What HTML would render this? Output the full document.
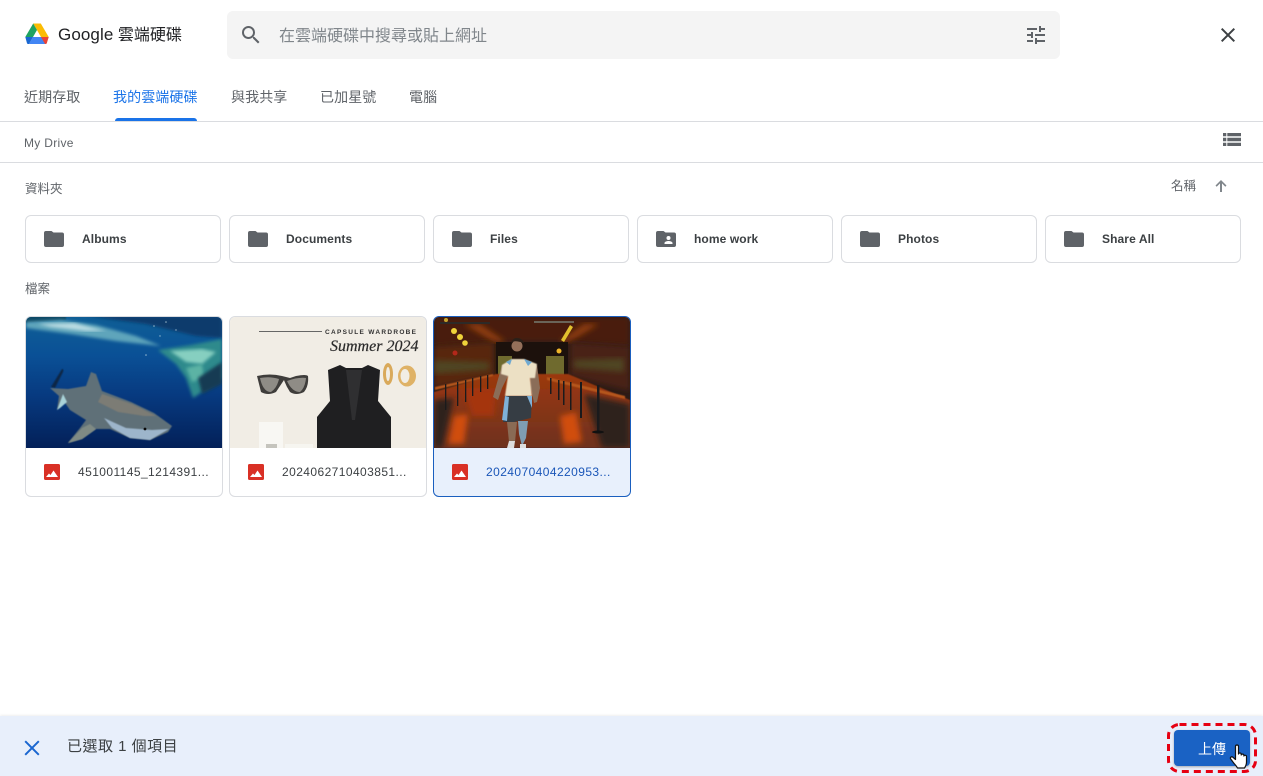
<!DOCTYPE html>
<html lang="zh-Hant"><head><meta charset="utf-8"><title>Google 雲端硬碟</title>
<style>
html,body{margin:0;padding:0;background:#fff}
body{width:1263px;height:776px;position:relative;overflow:hidden;font-family:"Liberation Sans","Noto Sans CJK TC",sans-serif;color:#5f6368}
.a{position:absolute;white-space:nowrap}
.tab{top:87px;font-size:14px;line-height:20px;color:#5f6368;letter-spacing:.1px}
.folder{position:absolute;top:215px;width:194px;height:46px;border:1px solid #dadce0;border-radius:6px;background:#fff}
.folder svg{position:absolute;left:18px;top:14px}
.folder span{position:absolute;left:56px;top:14px;font-size:12px;line-height:18px;font-weight:bold;color:#3c4043;letter-spacing:.1px}
.card{position:absolute;top:316px;width:196px;height:179px;border:1px solid #dadce0;border-radius:6px;background:#fff;overflow:hidden}
.card>svg.t{position:absolute;left:0;top:-1px}
.card svg.i{position:absolute;left:18px;top:147px}
.card span{position:absolute;left:52px;top:146px;font-size:12px;line-height:18px;color:#3c4043;letter-spacing:.42px}
</style></head><body>

<svg class="a" style="left:25px;top:23px" width="24" height="22" viewBox="0 0 24 22">
<path d="M8.2 .5H15.8L23.7 14H16Z" fill="#fbbc04"/>
<path d="M8.2 .5L12 7 8 14H.3Z" fill="#1ea362"/>
<path d="M8 14H23.7L20 21H4Z" fill="#4285f4"/>
<path d="M.3 14H8L4 21H3.2Q2.4 21 2 20.2Z" fill="#1967d2"/>
<path d="M16 14H23.7L21.8 20.2Q21.3 21 20.4 21H20Z" fill="#ea4335"/>
</svg>
<div class="a" style="left:58px;top:24px;font-size:16px;line-height:22px;color:#202124"><span style="font-size:17px;letter-spacing:.1px">Google</span> 雲端硬碟</div>

<div class="a" style="left:227px;top:11px;width:833px;height:48px;background:#f4f4f4;border-radius:6px"></div>
<svg class="a" style="left:239px;top:23px" width="24" height="24" viewBox="0 0 24 24"><path fill="#5f6368" d="M15.5 14h-.79l-.28-.27A6.471 6.471 0 0 0 16 9.5 6.5 6.5 0 1 0 9.5 16c1.61 0 3.09-.59 4.23-1.57l.27.28v.79l5 4.99L20.49 19l-4.99-5zm-6 0C7.01 14 5 11.99 5 9.5S7.01 5 9.5 5 14 7.01 14 9.5 11.99 14 9.5 14z"/></svg>
<div class="a" style="left:279px;top:26px;font-size:16px;line-height:22px;color:#80868b">在雲端硬碟中搜尋或貼上網址</div>
<svg class="a" style="left:1024px;top:23px" width="24" height="24" viewBox="0 0 24 24"><path fill="#5f6368" d="M3 17v2h6v-2H3zM3 5v2h10V5H3zm10 16v-2h8v-2h-8v-2h-2v6h2zM7 9v2H3v2h4v2h2V9H7zm14 4v-2H11v2h10zm-6-4h2V7h4V5h-4V3h-2v6z"/></svg>
<svg class="a" style="left:1216px;top:23px" width="24" height="24" viewBox="0 0 24 24"><path fill="#3c4043" d="M19 6.400 17.600 5 12 10.600 6.400 5 5 6.400 10.600 12 5 17.600 6.400 19 12 13.400 17.600 19 19 17.600 13.400 12z"/></svg>

<div class="a tab" style="left:24px">近期存取</div>
<div class="a tab" style="left:113px;color:#1a73e8">我的雲端硬碟</div>
<div class="a tab" style="left:231px">與我共享</div>
<div class="a tab" style="left:320px">已加星號</div>
<div class="a tab" style="left:409px">電腦</div>
<div class="a" style="left:115px;top:118px;width:82px;height:3px;background:#1a73e8;border-radius:3px 3px 0 0"></div>
<div class="a" style="left:0;top:121px;width:1263px;height:1px;background:#dadce0"></div>
<div class="a" style="left:24px;top:134px;font-size:12px;line-height:18px;color:#5f6368;letter-spacing:.3px">My Drive</div>
<svg class="a" style="left:1223px;top:133px" width="18" height="13" viewBox="0 0 18 13"><path fill="#5f6368" d="M0 0h3.300v3.300H0zM4.300 0H18v3.300H4.300zM0 4.800h3.300v3.400H0zM4.300 4.800H18v3.400H4.300zM0 9.700h3.300V13H0zM4.300 9.700H18V13H4.300z"/></svg>
<div class="a" style="left:0;top:162px;width:1263px;height:1px;background:#dadce0"></div>

<div class="a" style="left:25px;top:180px;font-size:12.500px;line-height:18px">資料夾</div>
<div class="a" style="left:1171px;top:177px;font-size:12.500px;line-height:18px">名稱</div>
<svg class="a" style="left:1213px;top:178px" width="16" height="16" viewBox="0 0 16 16"><path fill="#80868b" d="M9 14V5.400l3.300 3.300 1.200-1.200L8 2 2.500 7.500l1.200 1.200L7 5.400V14z"/></svg>

<div class="folder" style="left:25px"><svg width="20" height="18" viewBox="0 0 20 18"><path fill="#5f6368" d="M2 1h5.500l2 1.500H18a2 2 0 0 1 2 2V15a2 2 0 0 1-2 2H2a2 2 0 0 1-2-2V3a2 2 0 0 1 2-2z"/></svg><span>Albums</span></div>
<div class="folder" style="left:229px"><svg width="20" height="18" viewBox="0 0 20 18"><path fill="#5f6368" d="M2 1h5.500l2 1.500H18a2 2 0 0 1 2 2V15a2 2 0 0 1-2 2H2a2 2 0 0 1-2-2V3a2 2 0 0 1 2-2z"/></svg><span>Documents</span></div>
<div class="folder" style="left:433px"><svg width="20" height="18" viewBox="0 0 20 18"><path fill="#5f6368" d="M2 1h5.500l2 1.500H18a2 2 0 0 1 2 2V15a2 2 0 0 1-2 2H2a2 2 0 0 1-2-2V3a2 2 0 0 1 2-2z"/></svg><span>Files</span></div>
<div class="folder" style="left:637px"><svg width="20" height="18" viewBox="0 0 20 18"><path fill="#5f6368" d="M2 1h5.500l2 1.500H18a2 2 0 0 1 2 2V15a2 2 0 0 1-2 2H2a2 2 0 0 1-2-2V3a2 2 0 0 1 2-2z"/><circle cx="12.500" cy="8" r="2" fill="#fff"/><path fill="#fff" d="M8.500 14v-1c0-1.300 2.700-2 4-2s4 .7 4 2v1z"/></svg><span>home work</span></div>
<div class="folder" style="left:841px"><svg width="20" height="18" viewBox="0 0 20 18"><path fill="#5f6368" d="M2 1h5.500l2 1.500H18a2 2 0 0 1 2 2V15a2 2 0 0 1-2 2H2a2 2 0 0 1-2-2V3a2 2 0 0 1 2-2z"/></svg><span>Photos</span></div>
<div class="folder" style="left:1045px"><svg width="20" height="18" viewBox="0 0 20 18"><path fill="#5f6368" d="M2 1h5.500l2 1.500H18a2 2 0 0 1 2 2V15a2 2 0 0 1-2 2H2a2 2 0 0 1-2-2V3a2 2 0 0 1 2-2z"/></svg><span>Share All</span></div>

<div class="a" style="left:25px;top:280px;font-size:12.500px;line-height:18px">檔案</div>

<div class="card" style="left:25px">
<svg class="t" width="196" height="132" viewBox="0 0 196 132">
<defs>
<linearGradient id="w" x1="0" y1="0" x2="0" y2="1"><stop offset="0" stop-color="#0f5f96"/><stop offset=".3" stop-color="#0a5096"/><stop offset=".6" stop-color="#073a80"/><stop offset="1" stop-color="#032058"/></linearGradient>
<filter id="b1"><feGaussianBlur stdDeviation="1.500"/></filter>
<filter id="b2"><feGaussianBlur stdDeviation=".5"/></filter>
</defs>
<rect width="196" height="132" fill="url(#w)"/>
<path d="M0 0H196V22L170 20 120 8 60 0Z" fill="#0f3a6c" filter="url(#b1)"/>
<path d="M0 0H40V4L0 7Z" fill="#0f4a66" filter="url(#b2)"/>
<path d="M0 6L35 4 70 9 110 20 135 30 90 25 45 18 0 12Z" fill="#5fa5bb" filter="url(#b1)"/>
<path d="M12 8L48 7 80 15 60 15 25 11Z" fill="#b9dbe2" filter="url(#b1)"/>
<path d="M132 34L165 29 196 23V62L182 72 167 82 160 62 150 48Z" fill="#2f8a8c" filter="url(#b1)"/>
<path d="M144 35L176 33 190 36 176 48 160 46Z" fill="#86cfc0" filter="url(#b1)"/>
<path d="M160 52L176 48 178 62 166 66Z" fill="#5cb3a4" filter="url(#b1)"/>
<path d="M172 62L196 46V68L176 78Z" fill="#123a52" filter="url(#b1)"/>
<g fill="#cfe3e8" opacity=".7"><circle cx="128" cy="10" r=".8"/><circle cx="140" cy="6" r=".8"/><circle cx="150" cy="14" r=".7"/><circle cx="120" cy="39" r=".8"/><circle cx="134" cy="20" r=".7"/></g>
<path d="M36 53Q38 53 37 56L29 72 25 71Z" fill="#0b2646" filter="url(#b2)"/>
<path d="M24 72L42 73 60 70 65 56 70 58 76 75 105 86 128 97 146 110 142 116 124 124 104 122 84 113 70 113 56 123 42 127 54 112 60 104 44 94 37 84 31 94 33 80Z" fill="#5f7078" filter="url(#b2)"/>
<path d="M76 78L106 88 130 100 118 100 92 96 72 86Z" fill="#7b7b74" filter="url(#b2)"/>
<path d="M78 102L100 112 126 114 143 113 124 124 104 122 86 112Z" fill="#9db5cb" filter="url(#b2)"/>
<path d="M37 78L41 86 34 92 31 94Z" fill="#a9d2d8" filter="url(#b2)"/>
<path d="M70 113L56 123 42 127 56 112 64 108Z" fill="#7f8a84" filter="url(#b2)"/>
<circle cx="119" cy="113" r="1.400" fill="#0a0a0a"/>
</svg>
<svg class="i" width="16" height="16" viewBox="0 0 16 16"><rect width="16" height="16" rx="1.500" fill="#d93025"/><path fill="#fff" d="M2 13l3-3.500 1.500 1.500 3-4.500L14 13z"/></svg>
<span>451001145_1214391...</span></div>

<div class="card" style="left:229px;width:196px">
<svg class="t" width="196" height="132" viewBox="0 0 196 132">
<rect width="196" height="132" fill="#f1ede5"/>
<rect x="29" y="15" width="63" height="1" fill="#666"/>
<text x="95" y="18" font-family="Liberation Sans" font-size="6.500" font-weight="bold" letter-spacing="1.300" fill="#333">CAPSULE WARDROBE</text>
<text x="100" y="35" font-family="Liberation Serif" font-size="16" font-style="italic" fill="#2b2b2b" stroke="#2b2b2b" stroke-width=".2">Summer 2024</text>
<path d="M27 60Q40 57 52 60L60 62 66 60Q76 58 78 60 79 70 74 76 66 80 60 76 56 70 54 64 50 70 46 76 38 80 31 76 27 68Z" fill="#3f3d3b"/>
<path d="M30 62Q40 60 49 63 47 72 41 76 33 76 30 62ZM57 65Q68 61 76 62 75 72 70 76 62 76 57 65Z" fill="#8f8c86"/>
<path d="M98 54L110 49 116 52 132 52 138 49 150 54 148 85 161 101 161 132H87V101L100 85Z" fill="#1f1f21"/>
<path d="M116 54H132L125 104 122 104Z" fill="#3a3a3c" opacity=".6"/>
<ellipse cx="158" cy="58" rx="5" ry="11" fill="#d9a95a"/><ellipse cx="158" cy="58" rx="2" ry="7" fill="#f1ede5"/>
<ellipse cx="177" cy="60" rx="9" ry="10.500" fill="#dfb266"/><ellipse cx="175" cy="60" rx="4.500" ry="7" fill="#f1ede5"/>
<rect x="29" y="106" width="24" height="26" fill="#f8f7f3"/>
<rect x="36" y="128" width="11" height="4" fill="#c5c4bd"/>
<rect x="55" y="128" width="28" height="4" fill="#f6f5f0"/>
</svg>
<svg class="i" width="16" height="16" viewBox="0 0 16 16"><rect width="16" height="16" rx="1.500" fill="#d93025"/><path fill="#fff" d="M2 13l3-3.500 1.500 1.500 3-4.500L14 13z"/></svg>
<span>2024062710403851...</span></div>

<div class="card" style="left:433px;border-color:#1a5fbf;background:#e8f0fc">
<svg class="t" width="196" height="132" viewBox="0 0 196 132">
<defs>
<filter id="b3"><feGaussianBlur stdDeviation="3"/></filter>
<filter id="b4"><feGaussianBlur stdDeviation=".5"/></filter>
<linearGradient id="fl" x1="0" y1="0" x2="0" y2="1"><stop offset="0" stop-color="#9c380e"/><stop offset="1" stop-color="#6e3220"/></linearGradient>
</defs>
<rect width="196" height="132" fill="#2b1b16"/>
<path d="M0 0H196V30L136 26H60L0 30Z" fill="#4a1f10" filter="url(#b3)"/>
<path d="M30 8L60 26H72L46 8ZM165 8L135 26H125L150 8Z" fill="#8f3c0d" filter="url(#b3)"/>
<path d="M0 30L60 26V60L0 72Z" fill="#58250f" filter="url(#b3)"/>
<path d="M136 26L196 30V75L136 60Z" fill="#4a2214" filter="url(#b3)"/>
<path d="M0 44L55 46V54L0 58ZM140 44L190 42V56L140 52Z" fill="#4f4420" filter="url(#b3)"/>
<rect x="62" y="26" width="72" height="34" fill="#1c110c"/>
<rect x="64" y="40" width="14" height="20" fill="#6f6a2e"/><rect x="112" y="40" width="18" height="20" fill="#6f6a2e"/>
<path d="M0 76L62 58H134L196 84V132H0Z" fill="url(#fl)" filter="url(#b4)"/>
<path d="M0 84L20 82 8 132H0ZM150 78L196 88V132H168Z" fill="#2d211c" filter="url(#b3)"/>
<path d="M20 100L34 98 30 128 14 128ZM126 100L142 96 148 126 130 128Z" fill="#d04d0d" filter="url(#b3)"/>
<path d="M30 72H62L60 100 38 100Z" fill="#a5360b" filter="url(#b3)"/>
<path d="M1 71L59 58V60L1 74ZM113 61L191 80V83L113 64Z" fill="#b5561f" filter="url(#b4)"/>
<g fill="#1a1a1c"><rect x="11" y="68" width="1.300" height="26"/><rect x="23" y="66" width="1.300" height="24"/><rect x="31" y="64" width="1.300" height="22"/><rect x="38" y="62" width="1.300" height="18"/><rect x="46" y="60" width="1.300" height="16"/><rect x="53" y="59" width="1.300" height="14"/>
<rect x="116" y="62" width="1.500" height="16"/><rect x="124" y="64" width="1.500" height="20"/><rect x="129" y="65" width="1.500" height="24"/><rect x="136" y="66" width="1.500" height="28"/><rect x="146" y="66" width="2" height="36"/><rect x="163" y="69" width="2.500" height="48"/></g>
<ellipse cx="164" cy="116" rx="6" ry="1.500" fill="#111"/>
<rect x="6" y="6" width="50" height="2" fill="#2d2a27"/><rect x="100" y="5" width="40" height="2" fill="#6a6458"/>
<circle cx="12" cy="4" r="2" fill="#c7a52e"/>
<circle cx="20" cy="15" r="3" fill="#efd33a"/><circle cx="26" cy="21" r="3" fill="#efd33a"/><circle cx="31" cy="27" r="2.800" fill="#efd33a"/>
<path d="M127 24L136 9 139 11 130 26Z" fill="#e2c12e"/><circle cx="125" cy="35" r="2.500" fill="#efb52a"/>
<circle cx="21" cy="37" r="2.500" fill="#b3281a"/>
<circle cx="83" cy="30" r="5.500" fill="#94705a"/>
<path d="M77 28Q78 23 90 27 88 22 83 22 78 22 77 28Z" fill="#2a2019"/>
<path d="M59 81L68 49 72 47 74 60 68 72 64 84Z" fill="#8b6d58"/>
<path d="M103 49L96 60 97 72 100 87 103 86 106 72Z" fill="#8b6d58"/>
<path d="M68 49L78 43H90L103 48 101 62 96 62 98 80H71L74 60 67 58Z" fill="#ece0c4" filter="url(#b4)"/>
<path d="M78 43L72 46 76 49ZM90 43L98 46 94 50Z" fill="#6fa9d1"/>
<path d="M71 80H98L97 102 80 106 69 106Z" fill="#363d44"/>
<path d="M71 80L68 104 73 105 75 81ZM93 80L98 92 98 80Z" fill="#7fb1d8"/>
<path d="M73 106H83L81 126H75Z" fill="#8a6b55"/>
<path d="M84 105H94L92 122 88 130 85 118Z" fill="#7f9db3"/>
<path d="M75 125H81L80 132H73ZM86 128H92V132H86Z" fill="#ddd"/>
</svg>
<svg class="i" width="16" height="16" viewBox="0 0 16 16"><rect width="16" height="16" rx="1.500" fill="#d93025"/><path fill="#fff" d="M2 13l3-3.500 1.500 1.500 3-4.500L14 13z"/></svg>
<span style="color:#1a56b8">2024070404220953...</span></div>

<div class="a" style="left:0;top:716px;width:1263px;height:60px;background:#e8effb;box-shadow:0 -1px 2px rgba(60,64,67,.08)"></div>
<svg class="a" style="left:20px;top:736px" width="24" height="24" viewBox="0 0 24 24"><path fill="#1a66d0" d="M19.500 5.900 18.100 4.500 12 10.600 5.900 4.500 4.500 5.900 10.600 12 4.500 18.100 5.900 19.500 12 13.400 18.100 19.500 19.500 18.100 13.400 12z"/></svg>
<div class="a" style="left:67px;top:737px;font-size:15px;line-height:20px;color:#3c4043;letter-spacing:.5px">已選取 1 個項目</div>

<div class="a" style="left:1174px;top:730px;width:76px;height:36px;background:#1a62c4;border-radius:4px;box-shadow:0 1px 2px rgba(60,64,67,.4)"></div>
<div class="a" style="left:1198px;top:739px;font-size:14px;line-height:20px;color:#fff">上傳</div>
<svg class="a" style="left:1167px;top:723px" width="90" height="50" viewBox="0 0 90 50"><rect x="1.500" y="1.500" width="87" height="47" rx="11" fill="none" stroke="#e60012" stroke-width="3" stroke-dasharray="7 5"/></svg>
<svg class="a" style="left:1229px;top:744px" width="20" height="26" viewBox="0 0 20 26"><path fill="#fff" stroke="#111" stroke-width="1.200" stroke-linejoin="round" d="M6.500 2.500c0-2 3-2 3 0V10c0-1.300 2.500-1.300 2.700 0v1c0-1.200 2.500-1.200 2.700.2v.8c0-1 2.600-1 2.600.5v5.500c0 3-1 4.500-2 6H8.500c-1-2-2.200-3-3.500-4.600L1.700 15c-1-1.500.8-3 2.300-1.700l2.500 2.200z"/></svg>
</body></html>
